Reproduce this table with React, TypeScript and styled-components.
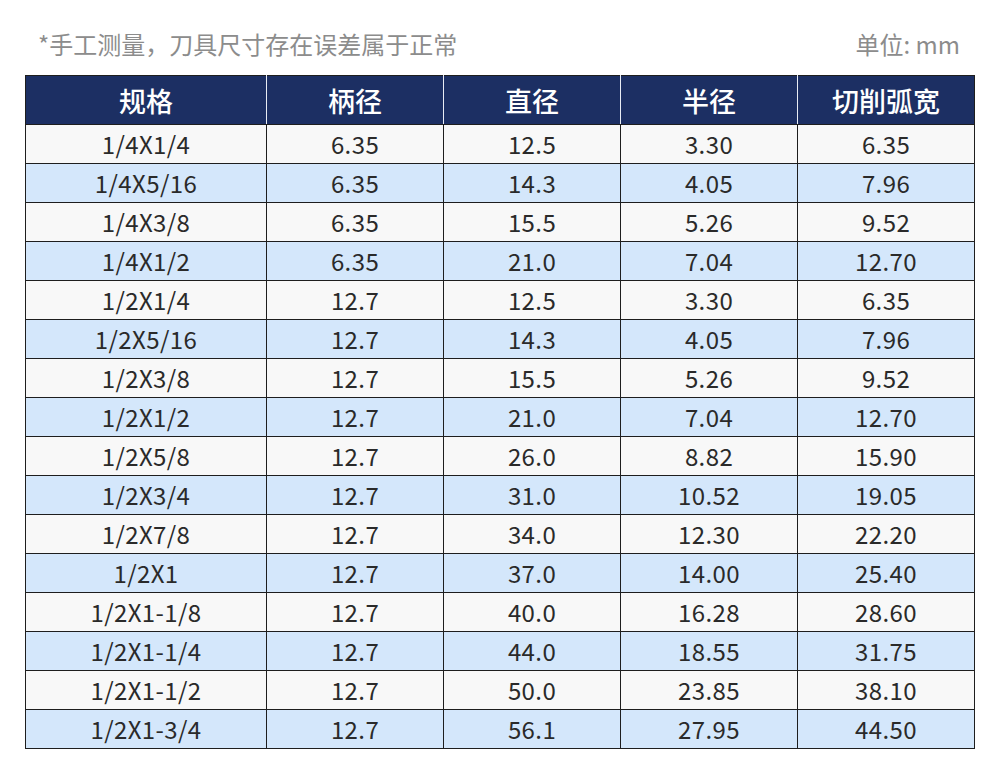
import React from "react";
import styled, { createGlobalStyle } from "styled-components";

const GlobalStyle = createGlobalStyle`
  html, body {
    margin: 0;
    padding: 0;
    background: #ffffff;
  }
  body {
    font-family: "Noto Sans CJK SC", "Noto Sans", sans-serif;
  }
`;

const Page = styled.div`
  width: 1000px;
  height: 774px;
  box-sizing: border-box;
  padding: 25px 0 0 25px;
  background: #ffffff;
`;

const NoteBar = styled.div`
  display: flex;
  justify-content: space-between;
  align-items: center;
  width: 949px;
  height: 36px;
  padding: 0 14px 0 13px;
  box-sizing: border-box;
  margin-bottom: 14px;
  font-size: 24px;
  color: #8c8c8c;
`;

const Note = styled.span``;

const Table = styled.table`
  border-collapse: collapse;
  table-layout: fixed;
  border: 1px solid #1e1e1e;
`;

const Col = styled.col<{ $w: number }>`
  width: ${({ $w }) => $w}px;
`;

const HeadCell = styled.th`
  height: 48px;
  padding: 0;
  background: #1c2f63;
  color: #ffffff;
  font-size: 27px;
  font-weight: 500;
  text-align: center;
  border-left: 1px solid #e8ecf4;
  border-bottom: 1px solid #1e1e1e;
  &:first-child {
    border-left: none;
  }
`;

const Row = styled.tr<{ $alt: boolean }>`
  background: ${({ $alt }) => ($alt ? "#d4e7fb" : "#f8f8f8")};
`;

const Cell = styled.td`
  height: 38px;
  padding: 0;
  text-align: center;
  font-size: 24px;
  letter-spacing: 0.4px;
  color: #2a2a2a;
  border: 1px solid #1e1e1e;
  line-height: 38px;
`;

const columns = [
  { title: "规格", w: 241 },
  { title: "柄径", w: 177 },
  { title: "直径", w: 177 },
  { title: "半径", w: 177 },
  { title: "切削弧宽", w: 177 },
];

const rows = [
  ["1/4X1/4", "6.35", "12.5", "3.30", "6.35"],
  ["1/4X5/16", "6.35", "14.3", "4.05", "7.96"],
  ["1/4X3/8", "6.35", "15.5", "5.26", "9.52"],
  ["1/4X1/2", "6.35", "21.0", "7.04", "12.70"],
  ["1/2X1/4", "12.7", "12.5", "3.30", "6.35"],
  ["1/2X5/16", "12.7", "14.3", "4.05", "7.96"],
  ["1/2X3/8", "12.7", "15.5", "5.26", "9.52"],
  ["1/2X1/2", "12.7", "21.0", "7.04", "12.70"],
  ["1/2X5/8", "12.7", "26.0", "8.82", "15.90"],
  ["1/2X3/4", "12.7", "31.0", "10.52", "19.05"],
  ["1/2X7/8", "12.7", "34.0", "12.30", "22.20"],
  ["1/2X1", "12.7", "37.0", "14.00", "25.40"],
  ["1/2X1-1/8", "12.7", "40.0", "16.28", "28.60"],
  ["1/2X1-1/4", "12.7", "44.0", "18.55", "31.75"],
  ["1/2X1-1/2", "12.7", "50.0", "23.85", "38.10"],
  ["1/2X1-3/4", "12.7", "56.1", "27.95", "44.50"],
];

export default function App() {
  return (
    <Page>
      <GlobalStyle />
      <NoteBar>
        <Note>*手工测量，刀具尺寸存在误差属于正常</Note>
        <Note>单位: mm</Note>
      </NoteBar>
      <Table>
        <colgroup>
          {columns.map((c) => (
            <Col key={c.title} $w={c.w} />
          ))}
        </colgroup>
        <thead>
          <tr>
            {columns.map((c) => (
              <HeadCell key={c.title}>{c.title}</HeadCell>
            ))}
          </tr>
        </thead>
        <tbody>
          {rows.map((r, i) => (
            <Row key={r[0]} $alt={i % 2 === 1}>
              {r.map((v, j) => (
                <Cell key={j}>{v}</Cell>
              ))}
            </Row>
          ))}
        </tbody>
      </Table>
    </Page>
  );
}
